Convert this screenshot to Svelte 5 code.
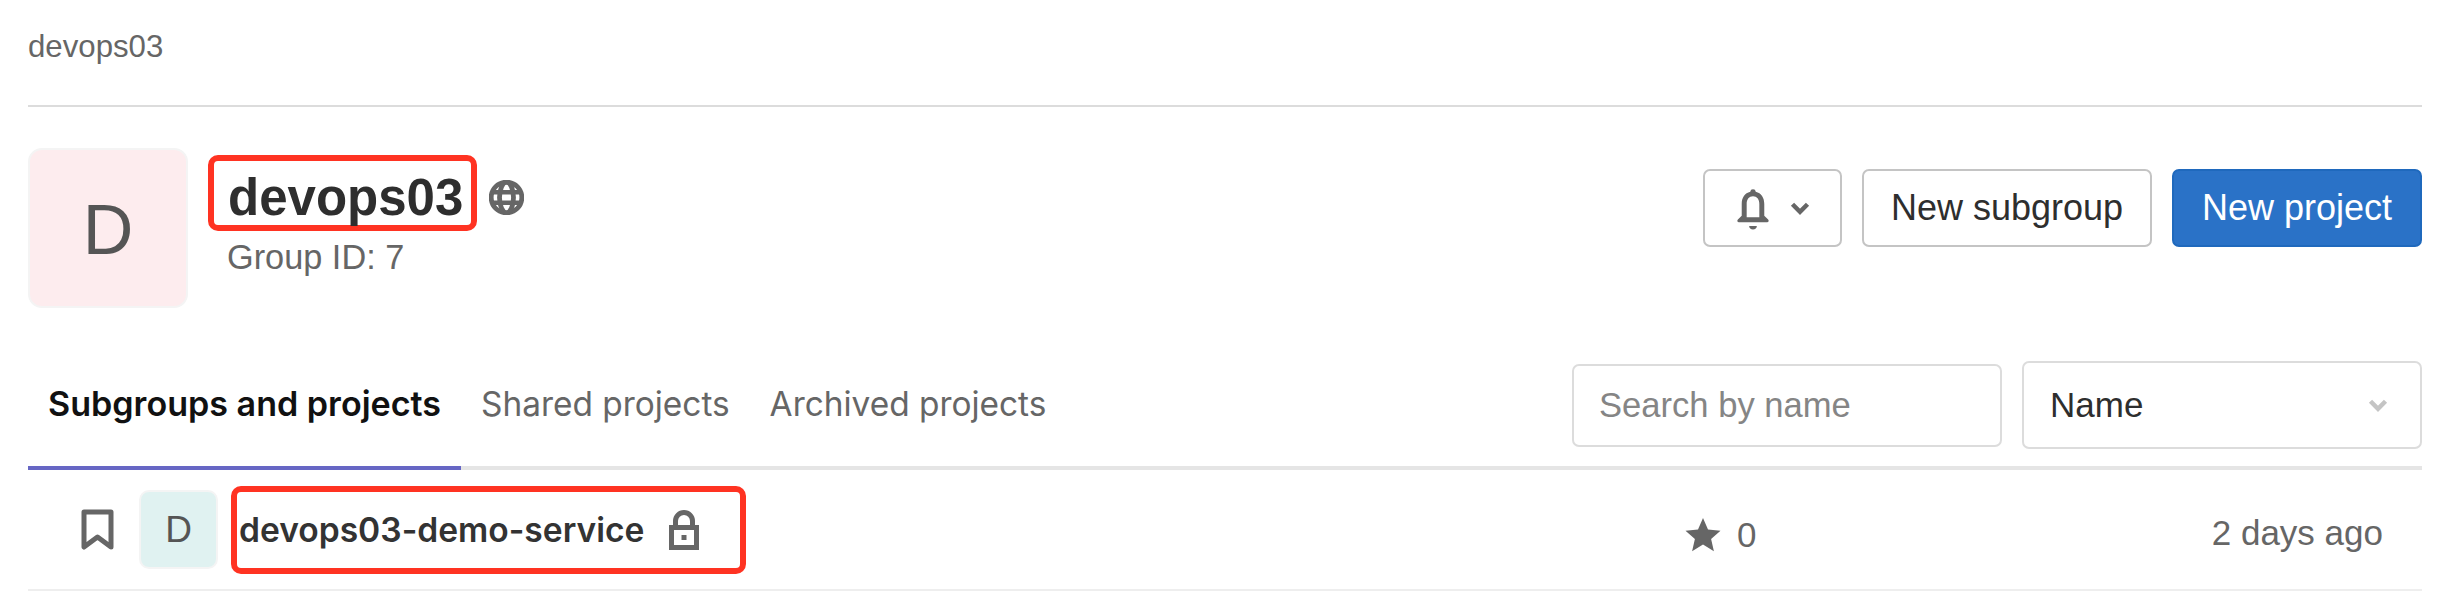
<script lang="ts">
	const tabs = ['Subgroups and projects', 'Shared projects', 'Archived projects'];
</script>

<main class="page">
	<nav class="crumbs">devops03</nav>

	<header class="group">
		<div class="avatar large">D</div>
		<div class="info">
			<div class="title-line">
				<h1 class="marked">devops03</h1>
				<svg class="globe" viewBox="0 0 16 16" aria-hidden="true">
					<circle cx="8" cy="8" r="7" fill="none" stroke="#666" stroke-width="2.2" />
					<ellipse cx="8" cy="8" rx="3.2" ry="7" fill="none" stroke="#666" stroke-width="2.2" />
					<path d="M1 5.600h14M1 10.400h14" stroke="#666" stroke-width="2" />
				</svg>
			</div>
			<p class="group-id">Group ID: 7</p>
		</div>
		<div class="actions">
			<button type="button" class="btn bell">
				<svg class="bell-icon" viewBox="0 0 16 16" aria-hidden="true">
					<path
						d="M8 1.200a1 1 0 0 1 1 .9c2 .5 3.100 2.200 3.100 4.400v4.300l1.400 1.400c.4.4.2 1-.4 1H2.900c-.6 0-.8-.6-.4-1l1.400-1.400V6.500c0-2.200 1.100-3.900 3.100-4.400a1 1 0 0 1 1-.9zM5.700 11.400h4.600V6.500c0-1.700-.9-2.800-2.300-2.800S5.700 4.800 5.700 6.500zM6.600 14.500h2.800c0 .8-.6 1.300-1.400 1.300s-1.400-.5-1.400-1.300z"
						fill="#666"
					/>
				</svg>
				<svg class="chevron" viewBox="0 0 16 16" aria-hidden="true">
					<path d="M3 5.500l5 5 5-5" fill="none" stroke="#666" stroke-width="3" />
				</svg>
			</button>
			<button type="button" class="btn subgroup">New subgroup</button>
			<button type="button" class="btn primary">New project</button>
		</div>
	</header>

	<div class="toolbar">
		<ul class="tabs">
			{#each tabs as tab, index (tab)}
				<li class="tab" class:active={index === 0}>{tab}</li>
			{/each}
		</ul>
		<div class="filters">
			<input class="search" type="text" placeholder="Search by name" />
			<div class="select">
				<span>Name</span>
				<svg class="select-chevron" viewBox="0 0 16 16" aria-hidden="true">
					<path d="M3 5.500l5 5 5-5" fill="none" stroke="#c4c4c4" stroke-width="3" />
				</svg>
			</div>
		</div>
	</div>

	<div class="row">
		<svg class="bookmark" viewBox="0 0 33 41" aria-hidden="true">
			<path d="M3 3h27v35l-13.500-10L3 38z" fill="none" stroke="#666" stroke-width="5" stroke-linejoin="round" />
		</svg>
		<div class="avatar small">D</div>
		<div class="project marked">
			<span class="project-name">devops03-demo-service</span>
			<svg class="lock" viewBox="0 0 30 40" aria-hidden="true">
				<path
					fill="#666"
					fill-rule="evenodd"
					d="M0 15h4V11a11 11 0 0 1 22 0v4h4v25H0zM9 15h12V11a6 6 0 0 0-12 0zM5 20v15h20V20zM12.500 25h5v5h-5z"
				/>
			</svg>
		</div>
		<div class="stars">
			<svg class="star" viewBox="0 0 36 36" aria-hidden="true">
				<path d="M18 1l5 11.500 12.500 1.200-9.400 8.300 2.800 12.300L18 27.600 7.100 34.300l2.800-12.300L.5 13.700 13 12.500z" fill="#666" />
			</svg>
			<span>0</span>
		</div>
		<div class="updated">2 days ago</div>
	</div>
</main>

<style>
	:global(body) {
		background: #fff;
		font-family: 'Liberation Sans', Arial, sans-serif;
	}

	.page {
		box-sizing: border-box;
		height: 594px;
		padding: 0 28px;
		color: #2e2e2e;
	}

	.crumbs {
		height: 107px;
		box-sizing: border-box;
		padding-top: 31px;
		border-bottom: 2px solid #dcdcdc;
		font-size: 31.2px;
		line-height: 32px;
		color: #666;
	}

	.group {
		display: flex;
		align-items: flex-start;
		padding-top: 41px;
	}

	.avatar {
		display: flex;
		align-items: center;
		justify-content: center;
		box-sizing: border-box;
		flex: none;
		border: 2px solid #f4f4f4;
		color: #555;
	}

	.avatar.large {
		width: 160px;
		height: 160px;
		padding-top: 3px;
		border-radius: 14px;
		background: #fdecee;
		font-size: 70px;
	}

	.avatar.small {
		width: 79px;
		height: 79px;
		border-radius: 10px;
		background: #e0f2f1;
		font-size: 37px;
		margin-left: 25px;
	}

	.info {
		margin-left: 20px;
		padding-top: 7px;
	}

	.title-line {
		display: flex;
		align-items: center;
		gap: 12px;
	}

	.marked {
		box-sizing: border-box;
		border: 6px solid #ff3322;
		border-radius: 10px;
	}

	h1 {
		margin: 0;
		height: 76px;
		padding: 8px 8px 0 14px;
		font-size: 51px;
		line-height: 58px;
		font-weight: 700;
		color: #2e2e2e;
	}

	.globe {
		width: 35px;
		height: 35px;
		margin-top: 9px;
	}

	.group-id {
		margin: 6px 0 0 19px;
		font-size: 34.3px;
		line-height: 40px;
		color: #666;
	}

	.actions {
		display: flex;
		gap: 20px;
		margin-left: auto;
		padding-top: 21px;
	}

	.btn {
		box-sizing: border-box;
		height: 78px;
		padding: 0;
		border: 2px solid #c4c4c4;
		border-radius: 7px;
		background: #fff;
		font: inherit;
		font-size: 36px;
		color: #2e2e2e;
	}

	.btn.subgroup {
		width: 290px;
	}

	.btn.primary {
		width: 250px;
		border-color: #1f69bd;
		background: #2a72c7;
		color: #fff;
	}

	.bell {
		display: flex;
		align-items: center;
		gap: 13px;
		width: 139px;
		padding: 0 0 0 26px;
	}

	.bell-icon {
		width: 44px;
		height: 44px;
	}

	.chevron {
		width: 24px;
		height: 24px;
	}

	.toolbar {
		display: flex;
		justify-content: space-between;
		height: 162px;
		box-sizing: border-box;
		border-bottom: 4px solid #e5e5e5;
	}

	.tabs {
		display: flex;
		align-self: flex-end;
		margin: 0;
		padding: 0;
		list-style: none;
		font-family: Inter, 'Liberation Sans', sans-serif;
		font-size: 33.4px;
		color: #666;
	}

	.tab {
		height: 103px;
		box-sizing: border-box;
		padding: 17px 20px 0;
		margin-bottom: -4px;
		line-height: 40px;
		white-space: nowrap;
	}

	.tab.active {
		font-size: 34.1px;
		font-weight: 600;
		color: #111;
		border-bottom: 4px solid #6666c4;
	}

	.filters {
		display: flex;
		align-self: flex-end;
		align-items: center;
		gap: 20px;
		padding-bottom: 17px;
	}

	.search {
		box-sizing: border-box;
		width: 430px;
		height: 83px;
		padding: 0 25px;
		border: 2px solid #dcdcdc;
		border-radius: 7px;
		font: inherit;
		font-size: 34.6px;
		outline: none;
	}

	.search::placeholder {
		color: #858585;
	}

	.select {
		display: flex;
		align-items: center;
		justify-content: space-between;
		box-sizing: border-box;
		width: 400px;
		height: 88px;
		padding: 0 30px 0 26px;
		border: 2px solid #dcdcdc;
		border-radius: 7px;
		font-size: 35px;
	}

	.select-chevron {
		width: 24px;
		height: 24px;
	}

	.row {
		display: flex;
		align-items: center;
		height: 121px;
		box-sizing: border-box;
		border-bottom: 2px solid #eee;
		padding-left: 53px;
	}

	.bookmark {
		width: 33px;
		height: 41px;
		flex: none;
	}

	.project {
		display: flex;
		align-items: center;
		gap: 25px;
		width: 515px;
		height: 88px;
		margin-left: 13px;
		padding-left: 2px;
	}

	.project-name {
		font-family: Inter, 'Liberation Sans', sans-serif;
		font-size: 33.6px;
		font-weight: 600;
		color: #333;
		white-space: nowrap;
	}

	.lock {
		width: 30px;
		height: 40px;
	}

	.stars {
		display: flex;
		align-items: center;
		gap: 16px;
		margin-left: 939px;
		padding-top: 11px;
		font-size: 35px;
		color: #666;
	}

	.star {
		width: 36px;
		height: 36px;
	}

	.updated {
		margin-left: auto;
		padding: 7px 39px 0 0;
		font-size: 35px;
		color: #666;
	}
</style>
